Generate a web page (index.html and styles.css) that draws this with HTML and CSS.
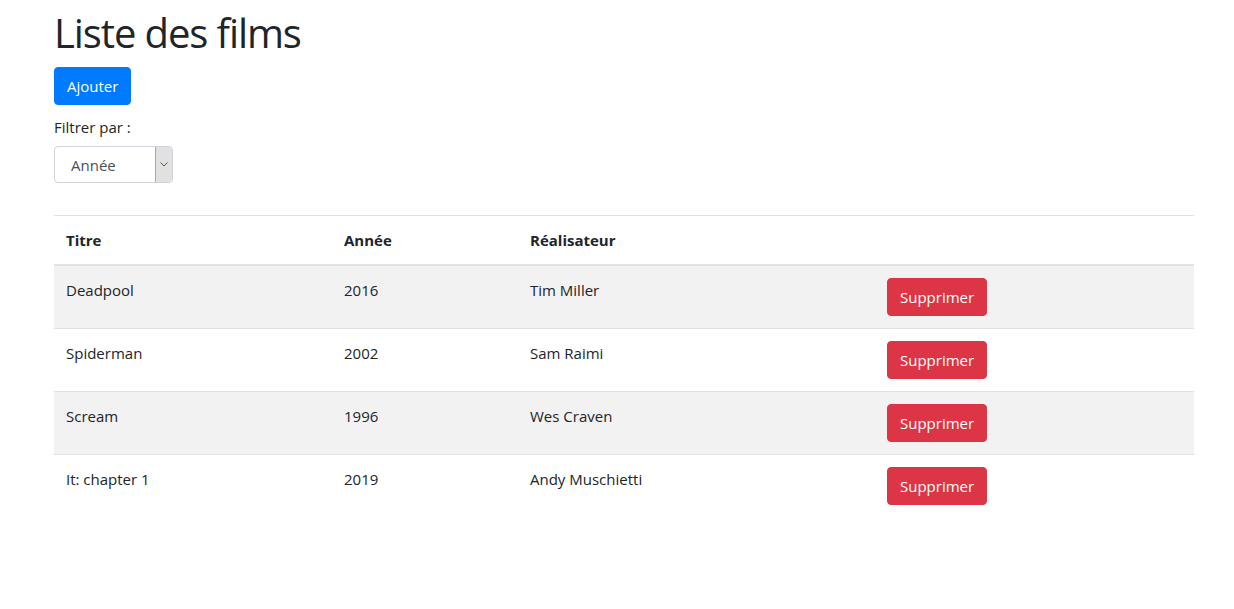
FILE: index.html
```html
<!DOCTYPE html>
<html lang="fr">
<head>
<meta charset="utf-8">
<title>Liste des films</title>
<link rel="stylesheet" href="styles.css">
</head>
<body>
<div class="container">
  <h1 class="title">Liste des films</h1>
  <button class="btn btn-primary" type="button">Ajouter</button>
  <div class="filter">
    <label class="filter-label" for="filtre">Filtrer par :</label>
    <div class="select-wrap">
      <select id="filtre" class="select">
        <option>Année</option>
        <option>Titre</option>
        <option>Réalisateur</option>
      </select>
      <span class="select-arrow">
        <svg width="8" height="5" viewBox="0 0 8 5"><path d="M0.5 0.5 L4 4 L7.5 0.5" fill="none" stroke="#555" stroke-width="1"/></svg>
      </span>
    </div>
  </div>
  <table class="table">
    <thead>
      <tr><th class="c1">Titre</th><th class="c2">Année</th><th class="c3">Réalisateur</th><th class="c4"></th></tr>
    </thead>
    <tbody>
      <tr class="odd"><td>Deadpool</td><td>2016</td><td>Tim Miller</td><td><button class="btn btn-danger" type="button">Supprimer</button></td></tr>
      <tr><td>Spiderman</td><td>2002</td><td>Sam Raimi</td><td><button class="btn btn-danger" type="button">Supprimer</button></td></tr>
      <tr class="odd"><td>Scream</td><td>1996</td><td>Wes Craven</td><td><button class="btn btn-danger" type="button">Supprimer</button></td></tr>
      <tr><td>It: chapter 1</td><td>2019</td><td>Andy Muschietti</td><td><button class="btn btn-danger" type="button">Supprimer</button></td></tr>
    </tbody>
  </table>
</div>
</body>
</html>
```
FILE: styles.css
```css
* { box-sizing: border-box; }
body {
  margin: 0;
  font-family: "Open Sans", "Noto Sans", Arial, sans-serif;
  font-size: 16px;
  line-height: 1.5;
  color: #212529;
  background: #fff;
}
.container {
  width: 1140px;
  margin-left: 54px;
  padding-top: 9px;
}
.title {
  margin: 0 0 10px 0;
  font-size: 40px;
  font-weight: 400;
  line-height: 48px;
  letter-spacing: -1.1px;
}
.btn {
  display: inline-block;
  vertical-align: top;
  font-family: inherit;
  font-size: 15px;
  line-height: 24px;
  padding: 6px 12px;
  border: 1px solid transparent;
  border-radius: 4px;
  color: #fff;
  cursor: pointer;
}
.btn-primary { background: #007bff; border-color: #007bff; }
.btn-danger { background: #dc3545; border-color: #dc3545; }
.filter { margin-top: 10px; }
.filter-label {
  display: block;
  font-size: 15px;
  line-height: 24px;
  margin-bottom: 7px;
}
.select-wrap {
  position: relative;
  width: 119px;
  height: 37px;
}
.select {
  -webkit-appearance: none;
  appearance: none;
  width: 100%;
  height: 100%;
  font-family: inherit;
  font-size: 15px;
  color: #495057;
  background: #fff;
  border: 1px solid #ced4da;
  border-radius: 4px;
  padding: 0 20px 0 16px;
}
.select-arrow {
  position: absolute;
  top: 1px;
  right: 1px;
  width: 17px;
  height: 35px;
  background: #e1e1e1;
  border-left: 1px solid #a8a8a8;
  border-radius: 0 3px 3px 0;
  display: flex;
  align-items: center;
  justify-content: center;
}
.table {
  width: 1140px;
  margin-top: 32px;
  border-collapse: collapse;
  font-size: 15px;
}
.table th, .table td {
  padding: 12px;
  text-align: left;
  vertical-align: top;
  border-top: 1px solid #dee2e6;
  line-height: 24px;
}
.table th { font-weight: 700; }
.table thead th { border-bottom: 2px solid #dee2e6; }
.table tbody tr.odd { background: #f2f2f2; }
.c1 { width: 278px; }
.c2 { width: 186px; }
.c3 { width: 357px; }
.c4 { width: 319px; }
```
